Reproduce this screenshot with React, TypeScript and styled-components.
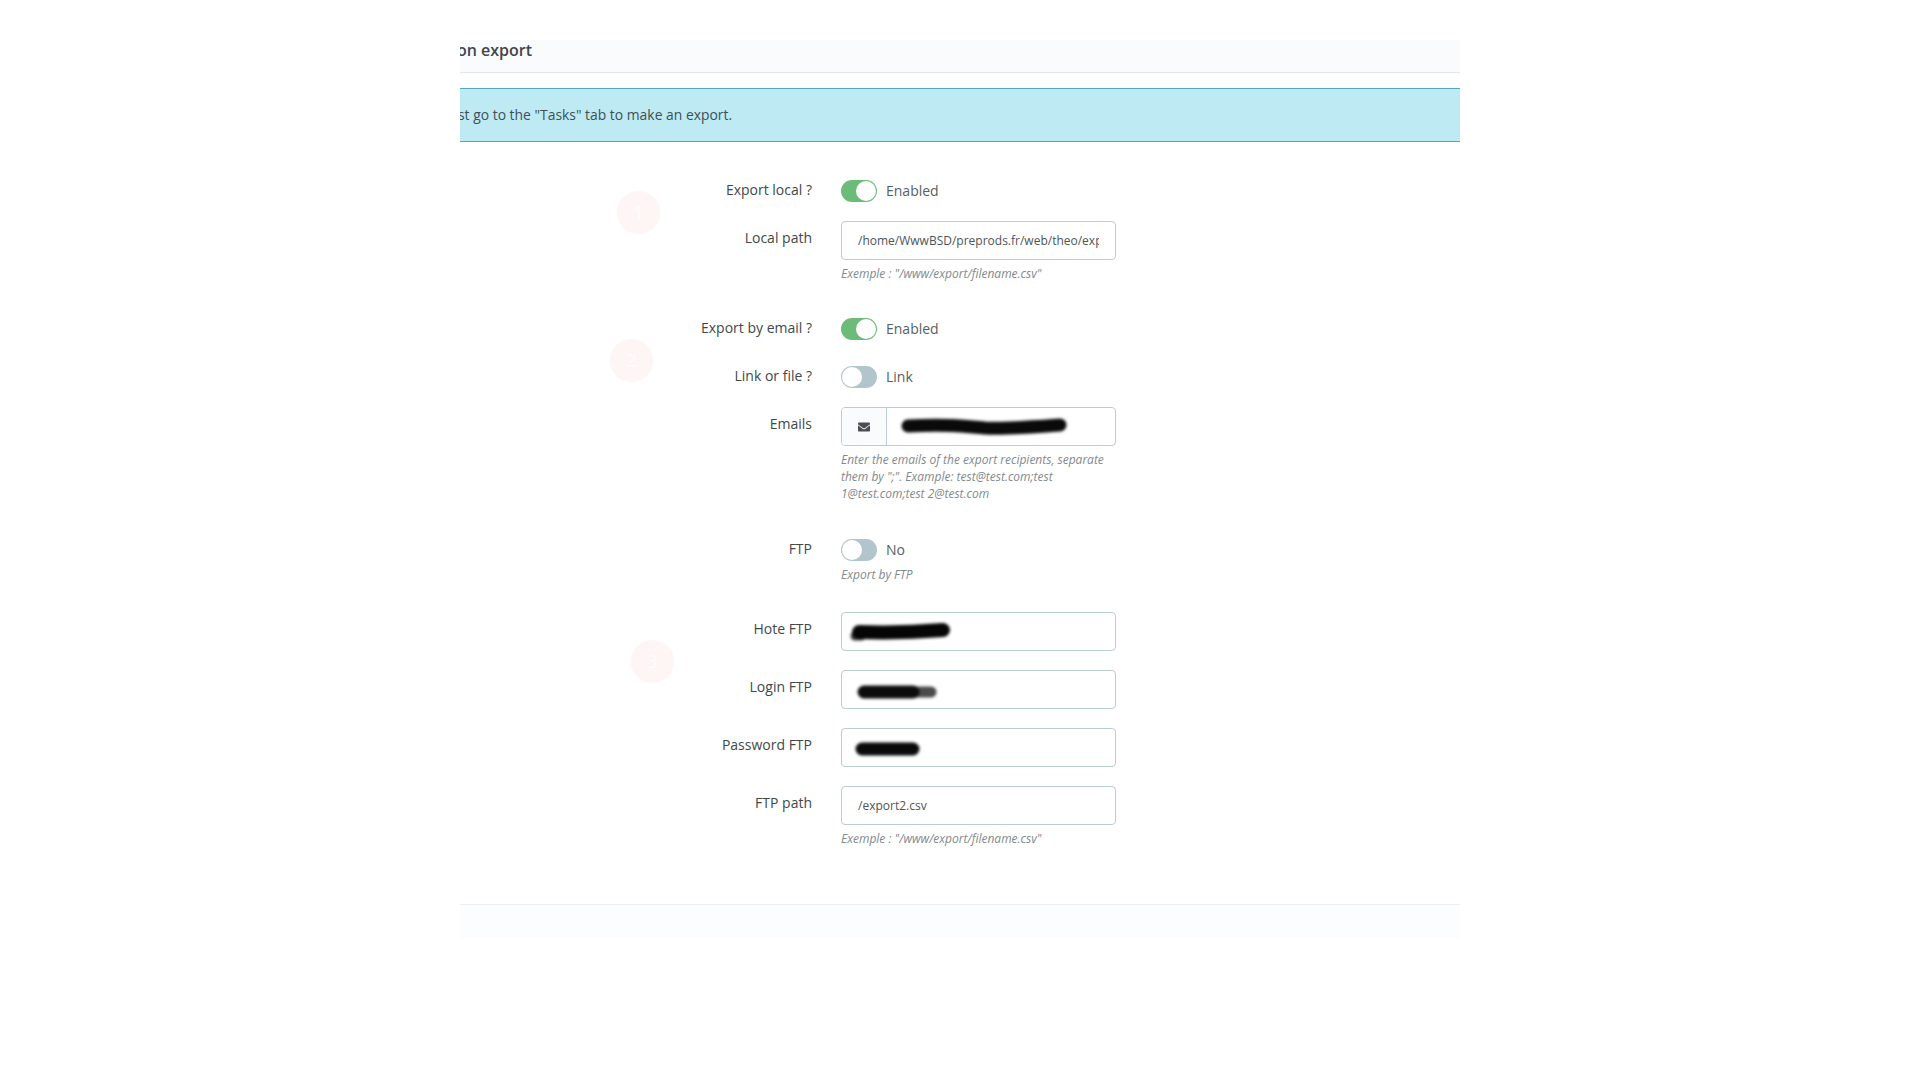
import React from 'react';
import styled, { createGlobalStyle } from 'styled-components';
import { FaEnvelope } from 'react-icons/fa';

const GlobalStyle = createGlobalStyle`
  html, body {
    margin: 0;
    padding: 0;
    background: #fff;
    font-family: "Open Sans", "Liberation Sans", sans-serif;
    color: #363a41;
  }
`;

const Panel = styled.section`
  width: 1000px;
  margin: 40px auto 0;
  overflow: hidden;
`;

const PanelHeader = styled.header`
  height: 32px;
  background: #fafbfc;
  border-bottom: 1px solid #e3e5e7;
  font-size: 16px;
  font-weight: 600;
  line-height: 20px;
  white-space: nowrap;
  color: #41464c;
`;

const Title = styled.h3`
  margin: 0 0 0 -3px;
  font: inherit;
`;

const Alert = styled.div`
  margin-top: 15px;
  box-sizing: border-box;
  height: 54px;
  padding-bottom: 2px;
  display: flex;
  align-items: center;
  background: #bdeaf3;
  border-top: 1px solid #50a8bb;
  border-bottom: 1px solid #50a8bb;
  font-size: 13.9px;
  color: #3d5056;
  white-space: nowrap;
`;

const AlertText = styled.p`
  margin: 0 0 0 -2px;
`;

const Form = styled.form`
  position: relative;
  padding-top: 38px;
`;

const Badge = styled.span<{ $left: number; $top: number }>`
  position: absolute;
  left: ${(p) => p.$left}px;
  top: ${(p) => p.$top}px;
  width: 43px;
  height: 43px;
  border-radius: 50%;
  background: #fef6f5;
  box-shadow: 0 0 3px #fffafa;
  color: #fffdfd;
  font-size: 18px;
  line-height: 42px;
  text-align: center;
`;

const Row = styled.div<{ $gap: number }>`
  display: grid;
  grid-template-columns: 352px 275px;
  column-gap: 29px;
  margin-bottom: ${(p) => p.$gap}px;
`;

const Label = styled.label<{ $input?: boolean }>`
  padding-top: ${(p) => (p.$input ? 7 : 0)}px;
  font-size: 14px;
  line-height: 20px;
  text-align: right;
  color: #41484c;
`;

const SwitchLine = styled.div`
  display: flex;
  align-items: center;
  gap: 9px;
  height: 22px;
  font-size: 14px;
  color: #566165;
`;

const SwitchText = styled.span`
  margin-top: -2px;
`;

const Track = styled.span<{ $on?: boolean }>`
  position: relative;
  width: 36px;
  height: 22px;
  border-radius: 11px;
  background: ${(p) => (p.$on ? '#6cbb78' : '#b2c5cc')};

  &::after {
    content: '';
    position: absolute;
    top: 1px;
    left: ${(p) => (p.$on ? 15 : 1)}px;
    width: 20px;
    height: 20px;
    border-radius: 50%;
    background: #fff;
  }
`;

const Field = styled.div`
  display: flex;
  box-sizing: border-box;
  height: 39px;
  border: 1px solid #bbcdd2;
  border-radius: 4px;
  background: #fff;
`;

const Addon = styled.span`
  flex: none;
  width: 44px;
  display: flex;
  align-items: center;
  justify-content: center;
  background: #fafbfc;
  border-right: 1px solid #bbcdd2;
  border-radius: 3px 0 0 3px;
  font-size: 12px;
  color: #4a4d52;
`;

const Value = styled.div`
  flex: 1;
  min-width: 0;
  margin: 0 16px;
  overflow: hidden;
  white-space: nowrap;
  font-size: 12px;
  line-height: 37px;
  color: #4d5559;
`;

const RedactedValue = styled(Value)`
  overflow: visible;
`;

const Blot = styled.svg`
  display: block;
  flex: none;
  overflow: visible;
  filter: blur(1.6px);
`;

const Help = styled.small`
  display: block;
  margin-top: 5px;
  font-size: 12px;
  font-style: italic;
  line-height: 17px;
  color: #7f8a8e;
`;

const PanelFooter = styled.footer`
  margin-top: 57px;
  height: 33px;
  background: #fcfdfe;
  border-top: 1px solid #eceef0;
`;

const Switch = ({ on, text }: { on?: boolean; text: string }) => (
  <SwitchLine>
    <Track $on={on} />
    <SwitchText>{text}</SwitchText>
  </SwitchLine>
);

const App = () => (
  <>
    <GlobalStyle />
    <Panel>
      <PanelHeader>
        <Title>on export</Title>
      </PanelHeader>
      <Alert>
        <AlertText>st go to the "Tasks" tab to make an export.</AlertText>
      </Alert>
      <Form>
        <Badge $left={157} $top={49}>1</Badge>
        <Badge $left={150} $top={197}>2</Badge>
        <Badge $left={171} $top={498}>3</Badge>

        <Row $gap={19}>
          <Label>Export local ?</Label>
          <Switch on text="Enabled" />
        </Row>
        <Row $gap={36}>
          <Label $input>Local path</Label>
          <div>
            <Field>
              <Value>/home/WwwBSD/preprods.fr/web/theo/export.csv</Value>
            </Field>
            <Help>Exemple : "/www/export/filename.csv"</Help>
          </div>
        </Row>

        <Row $gap={26}>
          <Label>Export by email ?</Label>
          <Switch on text="Enabled" />
        </Row>
        <Row $gap={19}>
          <Label>Link or file ?</Label>
          <Switch text="Link" />
        </Row>
        <Row $gap={37}>
          <Label $input>Emails</Label>
          <div>
            <Field>
              <Addon>
                <FaEnvelope />
              </Addon>
              <RedactedValue>
                <Blot width="168" height="37" viewBox="0 0 168 37">
                  <path
                    d="M5 18 C40 16 60 18 82 20 C105 21 130 19 157 17"
                    fill="none"
                    stroke="#0a0a0a"
                    strokeWidth="13"
                    strokeLinecap="round"
                  />
                </Blot>
              </RedactedValue>
            </Field>
            <Help>
              Enter the emails of the export recipients, separate them by ";". Example: test@test.com;test 1@test.com;test 2@test.com
            </Help>
          </div>
        </Row>

        <Row $gap={29}>
          <Label>FTP</Label>
          <div>
            <Switch text="No" />
            <Help>Export by FTP</Help>
          </div>
        </Row>

        <Row $gap={19}>
          <Label $input>Hote FTP</Label>
          <Field>
            <RedactedValue>
              <Blot width="100" height="37" viewBox="0 0 100 37">
                <path d="M-3 23 L3 23" fill="none" stroke="#3a3a3a" strokeWidth="9" strokeLinecap="round" />
                <path d="M1 19 C30 20 60 19 85 17" fill="none" stroke="#050505" strokeWidth="14" strokeLinecap="round" />
              </Blot>
            </RedactedValue>
          </Field>
        </Row>
        <Row $gap={19}>
          <Label $input>Login FTP</Label>
          <Field>
            <RedactedValue>
              <Blot width="80" height="37" viewBox="0 0 80 37">
                <path d="M55 21 L73 21" fill="none" stroke="#4a4a4a" strokeWidth="11" strokeLinecap="round" />
                <path d="M6 21 L55 21" fill="none" stroke="#0c0c0c" strokeWidth="13" strokeLinecap="round" />
              </Blot>
            </RedactedValue>
          </Field>
        </Row>
        <Row $gap={19}>
          <Label $input>Password FTP</Label>
          <Field>
            <RedactedValue>
              <Blot width="66" height="37" viewBox="0 0 66 37">
                <path d="M4 20 L55 20" fill="none" stroke="#0a0a0a" strokeWidth="13" strokeLinecap="round" />
              </Blot>
            </RedactedValue>
          </Field>
        </Row>
        <Row $gap={0}>
          <Label $input>FTP path</Label>
          <div>
            <Field>
              <Value>/export2.csv</Value>
            </Field>
            <Help>Exemple : "/www/export/filename.csv"</Help>
          </div>
        </Row>
      </Form>
      <PanelFooter />
    </Panel>
  </>
);

export default App;
